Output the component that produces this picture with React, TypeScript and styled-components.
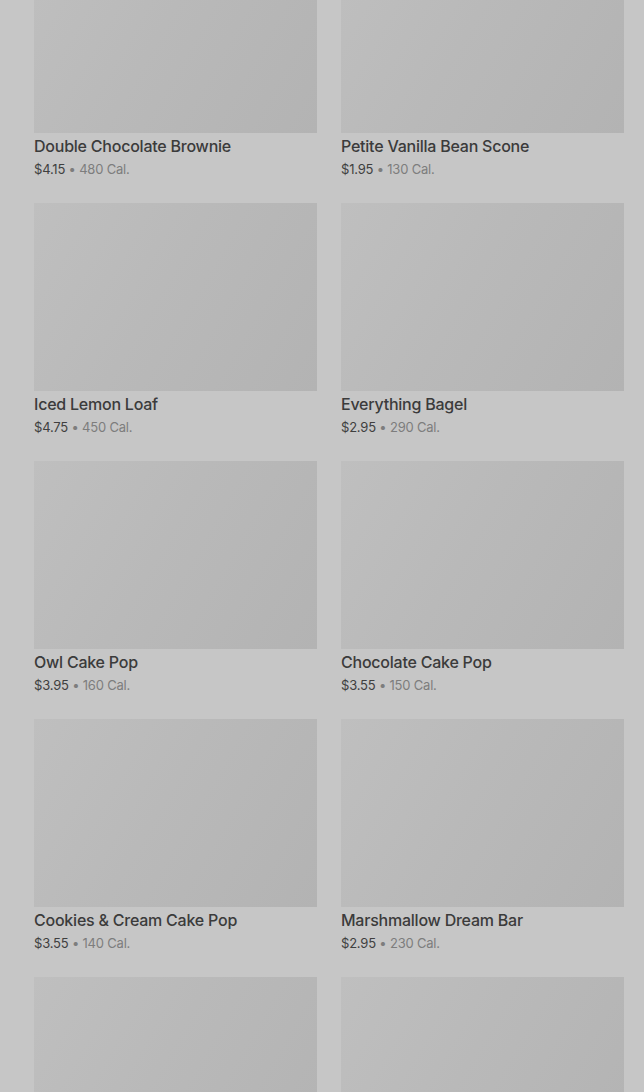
import React from "react";
import styled, { createGlobalStyle } from "styled-components";

const GlobalStyle = createGlobalStyle`
  html, body {
    margin: 0;
    padding: 0;
    background: #c6c6c6;
    font-family: Inter, "Noto Sans", sans-serif;
    overflow: hidden;
  }
`;

const Page = styled.div`
  width: 644px;
  height: 1092px;
  overflow: hidden;
  background: #c6c6c6;
`;

const Grid = styled.div`
  display: grid;
  grid-template-columns: 283px 283px;
  column-gap: 24px;
  row-gap: 25px;
  padding: 0 20px 0 34px;
  margin-top: -55px;
`;

const Card = styled.div`
  display: flex;
  flex-direction: column;
  cursor: pointer;
`;

const Thumb = styled.div`
  width: 100%;
  height: 188px;
  background: linear-gradient(120deg, #bfbfbf 0%, #b9b9b9 45%, #b3b3b3 100%);
`;

const Title = styled.p`
  margin: 2px 0 0;
  font-size: 16px;
  line-height: 22px;
  font-weight: 500;
  color: #3b3b3b;
  letter-spacing: -0.23px;
`;

const Meta = styled.p`
  margin: 3px 0 0;
  font-size: 13px;
  line-height: 18px;
  color: #7d7d7d;
  letter-spacing: -0.2px;

  .price {
    color: #3f3f3f;
  }
`;

interface Item {
  name: string;
  price: string;
  cal: number;
}

const items: Item[] = [
  { name: "Double Chocolate Brownie", price: "$4.15", cal: 480 },
  { name: "Petite Vanilla Bean Scone", price: "$1.95", cal: 130 },
  { name: "Iced Lemon Loaf", price: "$4.75", cal: 450 },
  { name: "Everything Bagel", price: "$2.95", cal: 290 },
  { name: "Owl Cake Pop", price: "$3.95", cal: 160 },
  { name: "Chocolate Cake Pop", price: "$3.55", cal: 150 },
  { name: "Cookies & Cream Cake Pop", price: "$3.55", cal: 140 },
  { name: "Marshmallow Dream Bar", price: "$2.95", cal: 230 },
];

const ProductCard = ({ item }: { item: Item }) => (
  <Card>
    <Thumb />
    <Title>{item.name}</Title>
    <Meta>
      <span className="price">{item.price}</span> • {item.cal} Cal.
    </Meta>
  </Card>
);

const App = () => {
  return (
    <Page>
      <GlobalStyle />
      <Grid>
        {items.map((item) => (
          <ProductCard key={item.name} item={item} />
        ))}
        <Card>
          <Thumb />
        </Card>
        <Card>
          <Thumb />
        </Card>
      </Grid>
    </Page>
  );
};

export default App;
